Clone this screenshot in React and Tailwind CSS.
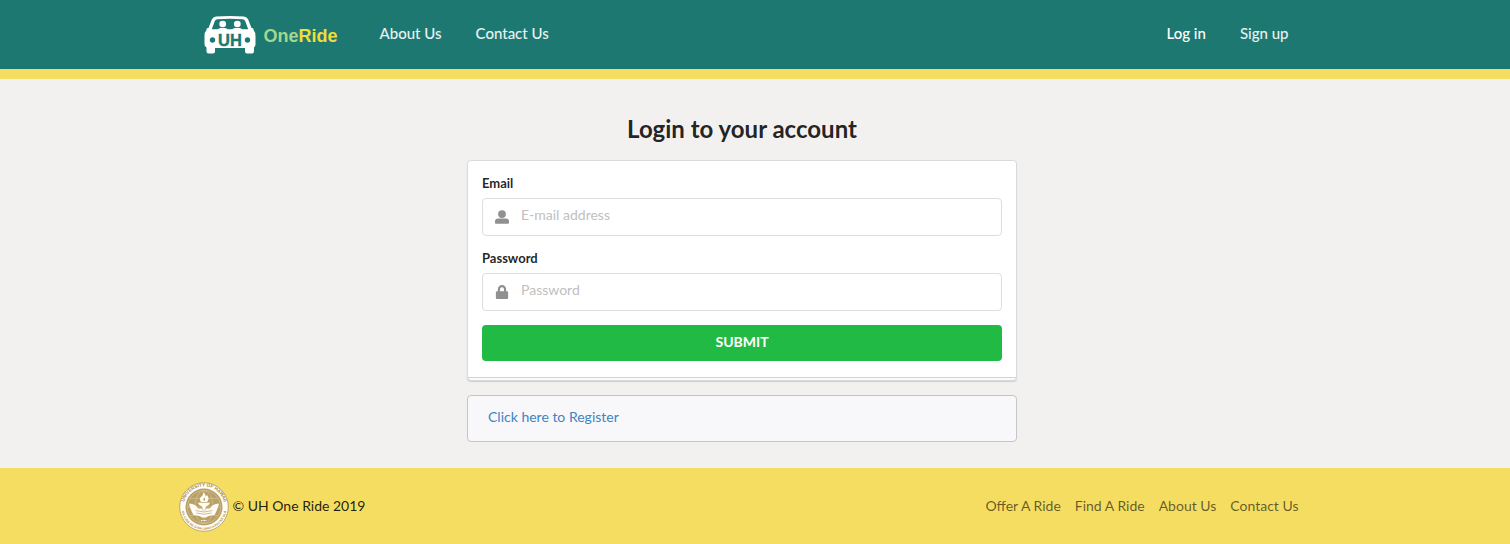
import React from "react";
import { FaLock } from "react-icons/fa";

function UserIcon(props) {
  return (
    <svg viewBox="0 0 14 14" fill="currentColor" {...props}>
      <circle cx="7" cy="4.100" r="3.900" />
      <path d="M0 12V11.500Q0 8.600 3 8.600H11Q14 8.600 14 11.500V12.700Q14 13.700 13 13.700H1Q0 13.700 0 12.700Z" />
    </svg>
  );
}

function CarLogo() {
  return (
    <svg width="52" height="38" viewBox="0 0 52 38" aria-hidden="true">
      <path
        fillRule="evenodd"
        fill="#fff"
        d="M12 0.500Q26 -0.500 40 0.500Q43 1 44.200 3.500L47.500 12Q50 12 49.500 14Q51.500 16 51.500 20V28Q51.500 31 50 31.500V35Q50 37.500 48 37.500H43Q41 37.500 41 35.500V32H11V35.500Q11 37.500 9 37.500H4.500Q2.500 37.500 2.500 35.500V31.500Q0.500 31 0.500 28V20Q0.500 16 2.500 14Q2 12 4.500 12L7.800 3.500Q9 1 12 0.500ZM13.500 3.200Q11.500 3.200 10.800 5L7.800 13.200H44.200L41.200 5Q40.500 3.200 38.500 3.200Q26 2.500 13.500 3.200Z"
      />
      <ellipse cx="18.700" cy="7.900" rx="3.400" ry="3.200" fill="#fff" />
      <ellipse cx="33.300" cy="7.900" rx="3.400" ry="3.200" fill="#fff" />
      <path d="M13.500 14Q14.500 11.800 18.700 11.800T24 14ZM28 14Q29 11.800 33.300 11.800T38.500 14Z" fill="#fff" />
      <circle cx="8.500" cy="24" r="2.700" fill="#1e7872" />
      <circle cx="43.500" cy="24" r="2.700" fill="#1e7872" />
      <text x="26" y="30" textAnchor="middle" fill="#1e7872" fontFamily="Liberation Sans, Arial, sans-serif" fontWeight="700" fontSize="16.500" stroke="#1e7872" strokeWidth="0.400">UH</text>
    </svg>
  );
}

function Seal() {
  return (
    <svg width="50" height="50" viewBox="0 0 50 50" aria-hidden="true">
      <defs>
        <path id="seal-top" d="M4.500 25a20.500 20.500 0 0 1 41 0" />
        <path id="seal-bottom" d="M2.300 25a22.700 22.700 0 0 0 45.400 0" />
      </defs>
      <circle cx="25" cy="25" r="24.300" fill="#fffdf5" stroke="#b9a067" strokeWidth="0.900" />
      <circle cx="25" cy="25" r="18.500" fill="#b9a067" />
      <g fill="none" stroke="#dccfa9" strokeWidth="0.500">
        <ellipse cx="25" cy="25" rx="9" ry="16.500" />
        <circle cx="25" cy="25" r="16.500" />
        <path d="M8.500 25h33M11 16.500h28M11 33.500h28M25 8.500v33" />
      </g>
      <path d="M10 21.500Q17 22 19 26.500H31Q33 22 40 21.500Q38.500 28 35.500 33Q29.500 33 27 35.500H23Q20.500 33 14.500 33Q11.500 28 10 21.500Z" fill="#fffdf5" />
      <path d="M16.500 28.500Q25 31.500 33.500 28.500M17.500 31Q25 33.500 32.500 31" stroke="#b9a067" fill="none" strokeWidth="0.700" />
      <path d="M18.500 20.500H31.500Q30 24 26.800 25V28H23.200V25Q20 24 18.500 20.500Z" fill="#fffdf5" stroke="#b9a067" strokeWidth="0.400" />
      <path d="M22 20Q19.500 16.500 22.500 14.500Q24.500 13 24 10.500Q27 12 26.800 14.500Q28 14 28 12.800Q31 17 28 20Z" fill="#fffdf5" />
      <path d="M25 19Q23.500 17 25.500 15.500Q27 17.500 25 19" fill="#b9a067" />
      <path d="M22 38.500h6" stroke="#fffdf5" strokeWidth="1" strokeDasharray="1 0.500" />
      <g fill="#a58b50" fontFamily="Liberation Sans, Arial, sans-serif" fontSize="4.700" fontWeight="700">
        <text textAnchor="middle"><textPath href="#seal-top" startOffset="50%">UNIVERSITY OF HAWAII</textPath></text>
        <text textAnchor="middle" fontSize="3.200"><textPath href="#seal-bottom" startOffset="50%">MA LUNA AE O NA LAHUI A PAU KE OLA</textPath></text>
      </g>
    </svg>
  );
}

function Field({ id, label, type, placeholder, icon: Icon }) {
  return (
    <div className="mb-3.5">
      <label htmlFor={id} className="mb-1.5 block text-[13px] leading-[17px] font-bold text-black/87">
        {label}
      </label>
      <div className="grid items-center">
        <input
          id={id}
          type={type}
          placeholder={placeholder}
          className="col-start-1 row-start-1 h-[38px] w-full rounded border border-[#dededf] bg-white pr-3.5 pb-1.5 pl-[38px] text-sm text-black/87 placeholder:text-[#c0c0c0] focus:border-[#85b7d9] focus:outline-none"
        />
        <Icon className="pointer-events-none col-start-1 row-start-1 ml-[13px] size-3.5 text-[#909090]" aria-hidden="true" />
      </div>
    </div>
  );
}

export default function App() {
  return (
    <div className="bg-[#f2f1f0] font-[Lato,sans-serif] text-sm text-black/87">
      <header className="border-b-10 border-[#f5dd62] bg-[#1e7872] pr-[26px]">
        <nav className="mx-auto flex h-[69px] max-w-[1127px] items-center pr-[17px] pl-[25px] text-[15px] font-medium text-white/90">
          <a href="#home" className="mr-[42px] flex items-center gap-2">
            <CarLogo />
            <span className="pt-0.5 font-['Liberation_Sans',Arial,sans-serif] text-lg leading-6 font-bold text-[#a3d78b]">
              One<span className="text-[#f1dc3d]">Ride</span>
            </span>
          </a>
          <a href="#about" className="mr-[34px] pb-0.5">About Us</a>
          <a href="#contact" className="pb-0.5">Contact Us</a>
          <a href="#login" className="mr-[34px] ml-auto pb-0.5 text-white">Log in</a>
          <a href="#signup" className="pb-0.5">Sign up</a>
        </nav>
      </header>

      <main className="pt-[34px] pr-[26px] pb-[26px]">
        <div className="mx-auto max-w-[550px]">
          <h2 className="mb-4 text-center text-2xl leading-[31px] font-bold">Login to your account</h2>
          <form onSubmit={(e) => e.preventDefault()} className="rounded border border-[#d9dadb] bg-[#fafafa] pb-0.5 shadow-[0_1px_1px_#cfcfcf]">
            <div className="rounded-t border-b border-[#d4d4d5] bg-white px-3.5 pt-3.5 pb-4">
              <Field id="email" label="Email" type="email" placeholder="E-mail address" icon={UserIcon} />
              <Field id="password" label="Password" type="password" placeholder="Password" icon={FaLock} />
              <button type="submit" className="block h-9 w-full rounded bg-[#21ba45] pb-0.5 text-sm font-bold text-white">
                SUBMIT
              </button>
            </div>
          </form>
          <div className="mt-3.5 rounded border border-[#c4c5c6] bg-[#f8f8fa] px-5 pt-[11px] pb-3.5 leading-5">
            <a href="#register" className="text-[#4183c4]">Click here to Register</a>
          </div>
        </div>
      </main>

      <footer className="bg-[#f5dd62] pr-[26px]">
        <div className="mx-auto flex max-w-[1127px] items-center py-3.5 pr-[7px]">
          <Seal />
          <span className="ml-1 pb-0.5">© UH One Ride 2019</span>
          <nav className="ml-auto flex gap-3.5 pb-0.5 text-black/60">
            <a href="#offer">Offer A Ride</a>
            <a href="#find">Find A Ride</a>
            <a href="#about">About Us</a>
            <a href="#contact">Contact Us</a>
          </nav>
        </div>
      </footer>
    </div>
  );
}
